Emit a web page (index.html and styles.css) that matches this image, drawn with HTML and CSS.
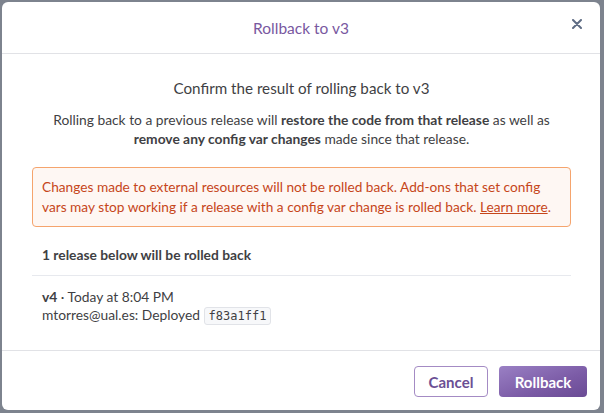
FILE: index.html
```html
<!DOCTYPE html>
<html>
<head>
<meta charset="utf-8">
<link rel="stylesheet" href="styles.css">
</head>
<body>
<div class="modal">
  <div class="modal-header">
    <h1 class="modal-title">Rollback to v3</h1>
    <button class="close" aria-label="Close">
      <svg width="10" height="10" viewBox="0 0 10 10"><path d="M1 1L9 9M9 1L1 9" stroke="#5e6c84" stroke-width="2" stroke-linecap="round"/></svg>
    </button>
  </div>
  <div class="modal-body">
    <h2 class="confirm">Confirm the result of rolling back to v3</h2>
    <p class="intro">Rolling back to a previous release will <b>restore the code from that release</b> as well as <b>remove any config var changes</b> made since that release.</p>
    <div class="warning">Changes made to external resources will not be rolled back. Add-ons that set config vars may stop working if a release with a config var change is rolled back. <a href="#">Learn more</a>.</div>
    <div class="releases">
      <div class="releases-head">1 release below will be rolled back</div>
      <div class="release">
        <div><b>v4</b> · Today at 8:04 PM</div>
        <div>mtorres@ual.es: Deployed <code class="sha">f83a1ff1</code></div>
      </div>
    </div>
  </div>
  <div class="modal-footer">
    <button class="btn btn-secondary">Cancel</button>
    <button class="btn btn-primary">Rollback</button>
  </div>
</div>
</body>
</html>
```
FILE: styles.css
```css
* { box-sizing: border-box; }
html, body { margin: 0; padding: 0; }
body {
  background: #7d838e;
  font-family: Lato, "Open Sans", sans-serif;
  color: #3f3f44;
  height: 413px;
  overflow: hidden;
}
.modal {
  margin: 2px 0 0 2px;
  width: 598px;
  height: 408px;
  background: #fff;
  border-radius: 6px;
  display: flex;
  flex-direction: column;
}
.modal-header {
  position: relative;
  height: 52px;
  border-bottom: 1px solid #e1e2e6;
  display: flex;
  align-items: center;
  justify-content: center;
}
.modal-title {
  margin: 0;
  font-size: 15.5px;
  font-weight: 400;
  color: #79589f;
  line-height: 20px;
  padding-top: 1px;
}
.close {
  position: absolute;
  right: 16px;
  top: 15px;
  width: 14px;
  height: 14px;
  padding: 0;
  border: 0;
  background: none;
  display: flex;
  align-items: center;
  justify-content: center;
}
.modal-body {
  flex: 1;
  padding: 24px 29px 0 30px;
  text-align: center;
}
.confirm {
  margin: 0;
  font-size: 15.2px;
  font-weight: 400;
  line-height: 20px;
}
.intro {
  margin: 12px 0 0;
  font-size: 13.8px;
  line-height: 19px;
}
.intro b { font-weight: 700; }
.warning {
  margin-top: 19px;
  border: 1px solid #f5a46d;
  background: #fef7f3;
  border-radius: 4px;
  padding: 9px;
  text-align: left;
  color: #c6461a;
  font-size: 13.7px;
  line-height: 20px;
}
.warning a { color: #c6461a; text-decoration: underline; }
.releases {
  text-align: left;
  margin-top: 18px;
  font-size: 13.8px;
}
.releases-head {
  font-weight: 700;
  line-height: 20px;
  padding: 0 10px 10px;
  border-bottom: 1px solid #e7e9ee;
}
.release {
  padding: 12px 10px 0;
  line-height: 18px;
}
.sha {
  display: inline-block;
  font-family: "DejaVu Sans Mono", monospace;
  font-size: 12px;
  line-height: 14px;
  padding: 1px 4px;
  background: #f7f8fa;
  border: 1px solid #e1e3e8;
  border-radius: 3px;
  color: #3f3f44;
}
.modal-footer {
  height: 60px;
  border-top: 1px solid #e1e2e6;
  display: flex;
  justify-content: flex-end;
  align-items: flex-start;
  gap: 11px;
  padding: 15px 13px 0 0;
}
.btn {
  height: 31px;
  border-radius: 4px;
  font-family: Lato, "Open Sans", sans-serif;
  font-size: 15px;
  font-weight: 700;
  padding: 0;
}
.btn-secondary {
  width: 74px;
  background: #fff;
  border: 1px solid #a48bc4;
  color: #6b4f94;
}
.btn-primary {
  width: 88px;
  border: 0;
  color: #fff;
  background: linear-gradient(160deg, #9a80c4 0%, #7b5ba6 60%, #6a4b94 100%);
}
```
